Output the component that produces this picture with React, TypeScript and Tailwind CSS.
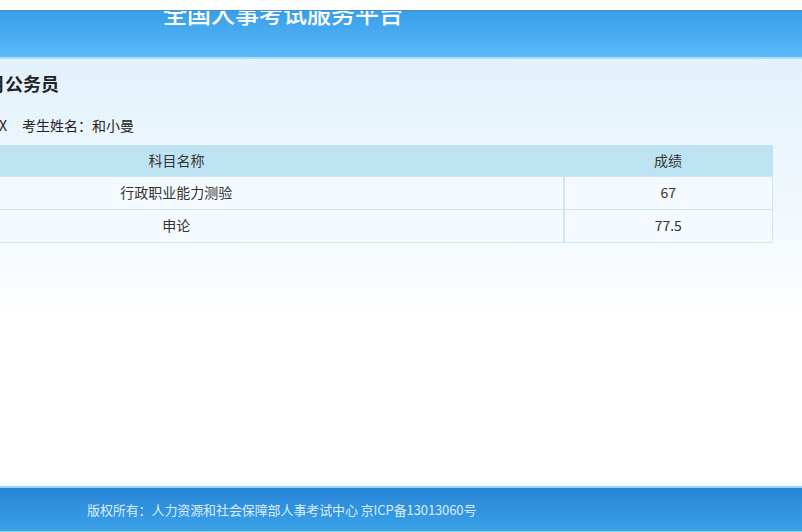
const font = { fontFamily: '"Noto Sans CJK SC", "Noto Sans", sans-serif' };

const rows = [
  { name: "行政职业能力测验", score: "67" },
  { name: "申论", score: "77.5" },
];

export default function App() {
  return (
    <div className="w-[802px] h-[532px] overflow-hidden bg-white flex flex-col" style={font}>
      {/* top strip */}
      <div className="h-[10px] bg-white shrink-0" />

      {/* header */}
      <div className="h-[49px] shrink-0 overflow-hidden border-t border-[#4a8fc8] border-b-2 border-b-[#a9ddf8] bg-gradient-to-b from-[#379ee8] to-[#5abafa]">
        <div className="mt-[-13px] pl-[163px] text-[24px] leading-[30px] text-white font-medium">
          全国人事考试服务平台
        </div>
      </div>

      {/* content */}
      <div className="flex-1 overflow-hidden bg-gradient-to-b from-[#e2f1fb] via-[#f6fbfe] via-45% to-white to-60%">
        <div className="ml-[-211px] w-[984px] text-[#222]">
          <div className="pt-[11px] h-[51px] flex text-[18px] leading-[26px] font-bold whitespace-nowrap">
            <span className="w-[215px] shrink-0 text-right">录用</span>
            <span className="ml-[1px]">公务员</span>
          </div>
          <div className="h-[35px] text-[14px] leading-[30px] flex whitespace-nowrap">
            <span className="w-[218px] shrink-0 text-right">准考证号：XXXXXXX</span>
            <span className="ml-[15px]">考生姓名：和小曼</span>
          </div>
          <table className="w-[984px] border-collapse text-[14px] text-[#333]">
            <thead>
              <tr className="h-[31px] bg-[#bee4f4]">
                <th className="w-[774px] font-normal">科目名称</th>
                <th className="font-normal">成绩</th>
              </tr>
            </thead>
            <tbody>
              {rows.map((r) => (
                <tr key={r.name} className="h-[33px] bg-[#f5fafe]">
                  <td className="border border-[#cfe5f2] text-center">{r.name}</td>
                  <td className="border border-[#cfe5f2] border-l-2 text-center">{r.score}</td>
                </tr>
              ))}
            </tbody>
          </table>
        </div>
      </div>

      {/* footer */}
      <div className="h-[46px] shrink-0 border-t-2 border-[#93d3f2] border-b border-b-[#8fd0f0] bg-gradient-to-b from-[#2783d4] to-[#3ba3ea] flex items-center pl-[87px]">
        <span className="text-[13px] tracking-[-0.1px] text-[#dcedf9]">版权所有：人力资源和社会保障部人事考试中心 京ICP备13013060号</span>
      </div>
    </div>
  );
}
